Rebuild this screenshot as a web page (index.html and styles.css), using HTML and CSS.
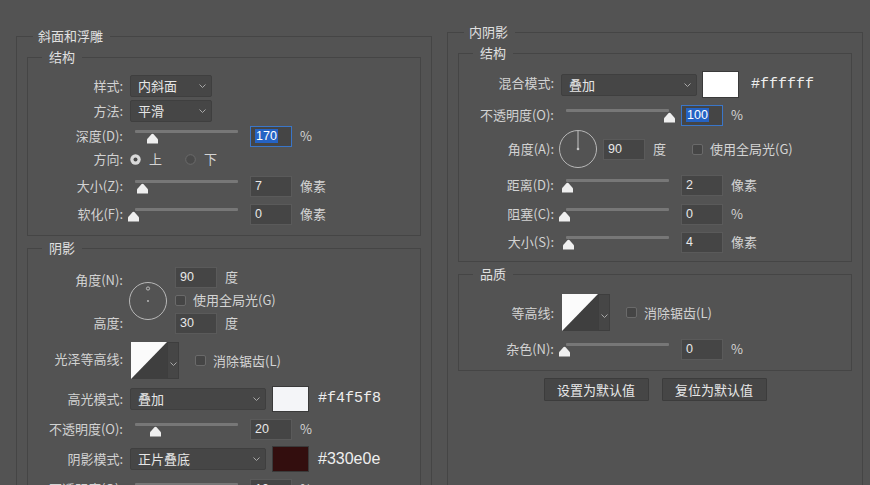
FILE: index.html
```html
<!DOCTYPE html>
<html lang="zh-CN">
<head>
<meta charset="utf-8">
<title>图层样式</title>
<link rel="stylesheet" href="styles.css">
</head>
<body>
<div class="page">
  <div class="col col-left">
    <fieldset class="grp">
      <legend>斜面和浮雕</legend>
      <fieldset class="sub">
        <legend>结构</legend>
        <div class="row">
          <span class="lbl">样式:</span>
          <div class="select w82"><span>内斜面</span><svg class="chev" viewBox="0 0 7 4"><path d="M0.5 0.5L3.5 3.5L6.5 0.5" fill="none" stroke="#a8a8a8"/></svg></div>
        </div>
        <div class="row mt3">
          <span class="lbl">方法:</span>
          <div class="select w82"><span>平滑</span><svg class="chev" viewBox="0 0 7 4"><path d="M0.5 0.5L3.5 3.5L6.5 0.5" fill="none" stroke="#a8a8a8"/></svg></div>
        </div>
        <div class="row mt3">
          <span class="lbl">深度(D):</span>
          <div class="slider"><div class="track"><svg class="thumb" style="left:17%" viewBox="0 0 13 11"><path d="M1 10.5V6.2L5.4 1.3Q6.5 0.1 7.6 1.3L12 6.2V10.5Z" fill="#efefef"/></svg></div></div>
          <span class="num focus"><span class="sel">170</span></span><span class="unit">%</span>
        </div>
        <div class="row mt1">
          <span class="lbl">方向:</span>
          <svg class="radio" viewBox="0 0 11 11"><circle cx="5.5" cy="5.5" r="5.2" fill="#d9d9d9"/><circle cx="5.5" cy="5.5" r="2" fill="#4a4a4a"/></svg>
          <span class="rt">上</span>
          <svg class="radio r2" viewBox="0 0 11 11"><circle cx="5.5" cy="5.5" r="4.8" fill="#4a4a4a" stroke="#6b6b6b"/></svg>
          <span class="rt">下</span>
        </div>
        <div class="row mt5">
          <span class="lbl">大小(Z):</span>
          <div class="slider"><div class="track"><svg class="thumb" style="left:7%" viewBox="0 0 13 11"><path d="M1 10.5V6.2L5.4 1.3Q6.5 0.1 7.6 1.3L12 6.2V10.5Z" fill="#efefef"/></svg></div></div>
          <span class="num">7</span><span class="unit">像素</span>
        </div>
        <div class="row mt6">
          <span class="lbl">软化(F):</span>
          <div class="slider"><div class="track"><svg class="thumb" style="left:-1%" viewBox="0 0 13 11"><path d="M1 10.5V6.2L5.4 1.3Q6.5 0.1 7.6 1.3L12 6.2V10.5Z" fill="#efefef"/></svg></div></div>
          <span class="num">0</span><span class="unit">像素</span>
        </div>
      </fieldset>

      <fieldset class="sub shade">
        <legend>阴影</legend>
        <div class="angle">
          <div class="alabels"><span class="lbl">角度(N):</span><span class="lbl">高度:</span></div>
          <svg class="dial" viewBox="0 0 40 40"><circle cx="20" cy="20" r="18.5" fill="none" stroke="#b8b8b8"/><circle cx="20" cy="7.5" r="1.6" fill="none" stroke="#c4c4c4" stroke-width="0.9"/><circle cx="20" cy="20" r="0.9" fill="#c4c4c4"/></svg>
          <div class="acol">
            <div class="row"><span class="num">90</span><span class="unit">度</span></div>
            <div class="row h24"><span class="cb"></span><span class="cbt">使用全局光(G)</span></div>
            <div class="row"><span class="num">30</span><span class="unit">度</span></div>
          </div>
        </div>
        <div class="row h37 mt7">
          <span class="lbl lbl-up">光泽等高线:</span>
          <div class="contour">
            <svg class="curve" viewBox="0 0 36 37"><rect width="36" height="37" fill="#3f3f3f"/><path d="M0 0H36L0 37Z" fill="#fbfbfb"/></svg>
            <div class="cdrop"><svg class="chev" viewBox="0 0 7 4"><path d="M0.5 0.5L3.5 3.5L6.5 0.5" fill="none" stroke="#a8a8a8"/></svg></div>
          </div>
          <span class="cb cb-c"></span><span class="cbt">消除锯齿(L)</span>
        </div>
        <div class="row h26 mt7">
          <span class="lbl">高光模式:</span>
          <div class="select w136"><span>叠加</span><svg class="chev" viewBox="0 0 7 4"><path d="M0.5 0.5L3.5 3.5L6.5 0.5" fill="none" stroke="#a8a8a8"/></svg></div>
          <span class="swatch sw-light"></span>
          <span class="hex">#f4f5f8</span>
        </div>
        <div class="row mt6">
          <span class="lbl">不透明度(O):</span>
          <div class="slider"><div class="track"><svg class="thumb" style="left:20%" viewBox="0 0 13 11"><path d="M1 10.5V6.2L5.4 1.3Q6.5 0.1 7.6 1.3L12 6.2V10.5Z" fill="#efefef"/></svg></div></div>
          <span class="num">20</span><span class="unit">%</span>
        </div>
        <div class="row h26 mt6">
          <span class="lbl">阴影模式:</span>
          <div class="select w136"><span>正片叠底</span><svg class="chev" viewBox="0 0 7 4"><path d="M0.5 0.5L3.5 3.5L6.5 0.5" fill="none" stroke="#a8a8a8"/></svg></div>
          <span class="swatch sw-dark"></span>
          <span class="hex sans">#330e0e</span>
        </div>
        <div class="row mt6">
          <span class="lbl">不透明度(O):</span>
          <div class="slider"><div class="track"><svg class="thumb" style="left:10%" viewBox="0 0 13 11"><path d="M1 10.5V6.2L5.4 1.3Q6.5 0.1 7.6 1.3L12 6.2V10.5Z" fill="#efefef"/></svg></div></div>
          <span class="num">10</span><span class="unit">%</span>
        </div>
      </fieldset>
    </fieldset>
  </div>

  <div class="col col-right">
    <fieldset class="grp grp-r">
      <legend>内阴影</legend>
      <fieldset class="sub sub-r">
        <legend>结构</legend>
        <div class="row h27">
          <span class="lbl lbl-up">混合模式:</span>
          <div class="select w136"><span>叠加</span><svg class="chev" viewBox="0 0 7 4"><path d="M0.5 0.5L3.5 3.5L6.5 0.5" fill="none" stroke="#a8a8a8"/></svg></div>
          <span class="swatch sw-white"></span>
          <span class="hex hex-r">#ffffff</span>
        </div>
        <div class="row mt6">
          <span class="lbl">不透明度(O):</span>
          <div class="slider"><div class="track"><svg class="thumb" style="left:100%" viewBox="0 0 13 11"><path d="M1 10.5V6.2L5.4 1.3Q6.5 0.1 7.6 1.3L12 6.2V10.5Z" fill="#efefef"/></svg></div></div>
          <span class="num focus"><span class="sel">100</span></span><span class="unit">%</span>
        </div>
        <div class="row h38 mt4">
          <span class="lbl">角度(A):</span>
          <svg class="dial dial-r" viewBox="0 0 40 40"><circle cx="20" cy="20" r="18.5" fill="none" stroke="#b8b8b8"/><path d="M20 2V20" stroke="#c4c4c4"/><circle cx="20" cy="20" r="1.3" fill="#c4c4c4"/></svg>
          <span class="num num-a">90</span><span class="unit">度</span>
          <span class="cb cb-a"></span><span class="cbt">使用全局光(G)</span>
        </div>
        <div class="row mt6">
          <span class="lbl">距离(D):</span>
          <div class="slider"><div class="track"><svg class="thumb" style="left:1%" viewBox="0 0 13 11"><path d="M1 10.5V6.2L5.4 1.3Q6.5 0.1 7.6 1.3L12 6.2V10.5Z" fill="#efefef"/></svg></div></div>
          <span class="num">2</span><span class="unit">像素</span>
        </div>
        <div class="row mt7">
          <span class="lbl">阻塞(C):</span>
          <div class="slider"><div class="track"><svg class="thumb" style="left:-1%" viewBox="0 0 13 11"><path d="M1 10.5V6.2L5.4 1.3Q6.5 0.1 7.6 1.3L12 6.2V10.5Z" fill="#efefef"/></svg></div></div>
          <span class="num">0</span><span class="unit">%</span>
        </div>
        <div class="row mt6">
          <span class="lbl">大小(S):</span>
          <div class="slider"><div class="track"><svg class="thumb" style="left:2%" viewBox="0 0 13 11"><path d="M1 10.5V6.2L5.4 1.3Q6.5 0.1 7.6 1.3L12 6.2V10.5Z" fill="#efefef"/></svg></div></div>
          <span class="num">4</span><span class="unit">像素</span>
        </div>
      </fieldset>

      <fieldset class="sub quality">
        <legend>品质</legend>
        <div class="row h37">
          <span class="lbl">等高线:</span>
          <div class="contour">
            <svg class="curve" viewBox="0 0 36 37"><rect width="36" height="37" fill="#3f3f3f"/><path d="M0 0H36L0 37Z" fill="#fbfbfb"/></svg>
            <div class="cdrop"><svg class="chev" viewBox="0 0 7 4"><path d="M0.5 0.5L3.5 3.5L6.5 0.5" fill="none" stroke="#a8a8a8"/></svg></div>
          </div>
          <span class="cb cb-c"></span><span class="cbt">消除锯齿(L)</span>
        </div>
        <div class="row mt7">
          <span class="lbl">杂色(N):</span>
          <div class="slider"><div class="track"><svg class="thumb" style="left:-1%" viewBox="0 0 13 11"><path d="M1 10.5V6.2L5.4 1.3Q6.5 0.1 7.6 1.3L12 6.2V10.5Z" fill="#efefef"/></svg></div></div>
          <span class="num">0</span><span class="unit">%</span>
        </div>
      </fieldset>

      <div class="btns">
        <button class="btn" type="button">设置为默认值</button>
        <button class="btn" type="button">复位为默认值</button>
      </div>
    </fieldset>
  </div>
</div>
</body>
</html>
```

FILE: styles.css
```css
* { box-sizing: border-box; }
html, body { margin: 0; padding: 0; }
body {
  background: #535353;
  width: 870px;
  height: 485px;
  overflow: hidden;
  font-family: "Noto Sans CJK SC", "Liberation Sans", sans-serif;
  font-size: 13px;
  color: #d4d4d4;
}
.page {
  display: flex;
  align-items: flex-start;
  gap: 15px;
  padding-left: 16px;
  height: 485px;
  overflow: hidden;
}
.col { width: 416px; flex: none; }
.col-left { padding-top: 27px; }
.col-right { padding-top: 23px; }

fieldset {
  margin: 0;
  min-width: 0;
  border: 1px solid #454545;
}
legend {
  font-size: 13px;
  line-height: 18px;
  color: #e0e0e0;
}
.grp { padding: 3px 10px 80px; }
.grp-r { padding-bottom: 140px; }
.grp > legend { margin-left: 6px; padding: 0 7px 0 5px; }
.sub { padding: 9px 0 10px; }
.sub > legend { margin-left: 14px; padding: 0 7px; }
.sub-r { padding-bottom: 8px; }
.shade { margin-top: 3px; padding-bottom: 30px; }
.quality { margin-top: 3px; padding-top: 11px; }

.row { display: flex; align-items: center; height: 22px; }
.h24 { height: 24px; }
.h26 { height: 26px; }
.h27 { height: 27px; }
.h37 { height: 37px; }
.h38 { height: 38px; }
.mt1 { margin-top: 1px; }
.mt3 { margin-top: 3px; }
.mt4 { margin-top: 4px; }
.mt5 { margin-top: 5px; }
.mt6 { margin-top: 6px; }
.mt7 { margin-top: 7px; }

.lbl {
  width: 95px;
  flex: none;
  text-align: right;
  margin-right: 7px;
  line-height: 16px;
  white-space: nowrap;
  color: #d2d2d2;
}
.lbl-up { margin-top: -3px; }

.select {
  display: flex;
  align-items: center;
  justify-content: space-between;
  height: 22px;
  flex: none;
  padding: 0 5px 0 7px;
  background: #464646;
  border: 1px solid #3f3f3f;
  border-radius: 2px;
  color: #e6e6e6;
  line-height: 16px;
}
.w82 { width: 82px; }
.w136 { width: 136px; }
.chev { width: 7px; height: 4px; display: block; }

.slider {
  width: 112px;
  height: 22px;
  flex: none;
  padding: 5px 4px 0 5px;
  margin-right: 8px;
}
.track {
  position: relative;
  height: 3px;
  background: #777777;
  border-radius: 1px;
}
.thumb {
  position: absolute;
  top: 3px;
  width: 13px;
  height: 11px;
  margin-left: -6.5px;
  display: block;
}

.num {
  width: 42px;
  height: 21px;
  flex: none;
  display: flex;
  align-items: center;
  padding-left: 4px;
  background: #454545;
  border: 1px solid #5a5a5a;
  font-family: "Liberation Sans", sans-serif;
  font-size: 12.5px;
  color: #e8e8e8;
}
.num.focus { border-color: #3a76c9; }
.sel { background: #2563c4; color: #ffffff; line-height: 14px; padding: 0 1px; }
.unit { margin-left: 8px; line-height: 16px; }

.radio { width: 11px; height: 11px; flex: none; display: block; }
.r2 { margin-left: 23px; }
.rt { margin-left: 8px; line-height: 16px; }

.angle { display: flex; height: 69px; }
.alabels {
  display: flex;
  flex-direction: column;
  gap: 27px;
  padding-top: 6px;
}
.alabels .lbl { margin-right: 5px; }
.dial { width: 40px; height: 40px; flex: none; display: block; margin-top: 15px; }
.acol { margin-left: 7px; }
.dial-r { margin: 0 0 0 -3px; }
.num-a { margin-left: 5px; }

.cb {
  width: 11px;
  height: 11px;
  flex: none;
  background: #454545;
  border: 1px solid #6a6a6a;
  border-radius: 2px;
}
.cbt { margin-left: 7px; line-height: 16px; }
.cb-c { margin-left: 16px; }
.cb-a { margin-left: 26px; }

.contour { display: flex; height: 37px; flex: none; margin-left: 1px; }
.curve { width: 36px; height: 37px; display: block; }
.cdrop {
  width: 12px;
  height: 37px;
  background: #464646;
  border: 1px solid #3e3e3e;
  display: flex;
  align-items: center;
  justify-content: center;
  padding-top: 6px;
}

.swatch {
  width: 37px;
  height: 26px;
  flex: none;
  margin-left: 6px;
  border: 1px solid #3a3a3a;
}
.sw-light { background: #f4f5f8; }
.sw-dark { background: #330e0e; }
.sw-white { background: #ffffff; height: 27px; margin-left: 5px; }
.hex {
  margin-left: 9px;
  font-family: "Liberation Mono", monospace;
  font-size: 15px;
  color: #eeeeee;
  line-height: 18px;
}
.hex.sans { font-family: "Liberation Sans", sans-serif; font-size: 16px; }
.hex-r { margin-left: 12px; }

.btns {
  display: flex;
  justify-content: center;
  gap: 13px;
  margin-top: 7px;
}
.btn {
  width: 105px;
  height: 23px;
  padding: 0;
  background: #464646;
  border: 1px solid #3c3c3c;
  border-radius: 1px;
  color: #e8e8e8;
  font-family: "Noto Sans CJK SC", sans-serif;
  font-size: 13px;
  line-height: 16px;
}
```
